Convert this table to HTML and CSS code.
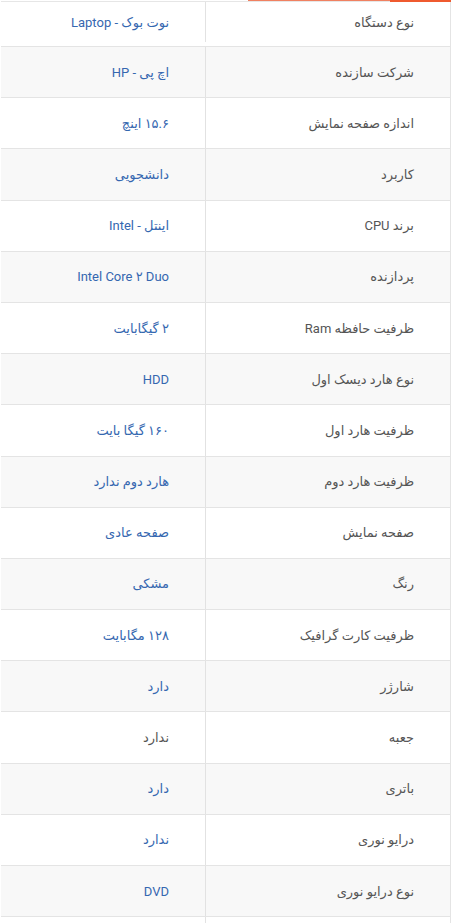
FILE: index.html
```html
<!DOCTYPE html>
<html lang="fa" dir="rtl">
<head>
<meta charset="utf-8">
<title>مشخصات</title>
<link rel="stylesheet" href="styles.css">
</head>
<body>
<div class="tabline">
  <span class="tab-active"></span>
  <span class="tab-hover"></span>
  <span class="tab-rest"></span>
</div>
<div class="specs">
  <div class="row"><div class="label">نوع دستگاه</div><div class="value link">نوت بوک - Laptop</div></div>
  <div class="row"><div class="label">شرکت سازنده</div><div class="value link">اچ پی - HP</div></div>
  <div class="row"><div class="label">اندازه صفحه نمایش</div><div class="value link">۱۵.۶ اینچ</div></div>
  <div class="row"><div class="label">کاربرد</div><div class="value link">دانشجویی</div></div>
  <div class="row"><div class="label">برند CPU</div><div class="value link">اینتل - Intel</div></div>
  <div class="row"><div class="label">پردازنده</div><div class="value link">Intel Core ۲ Duo</div></div>
  <div class="row"><div class="label">ظرفیت حافظه Ram</div><div class="value link">۲ گیگابایت</div></div>
  <div class="row"><div class="label">نوع هارد دیسک اول</div><div class="value link">HDD</div></div>
  <div class="row"><div class="label">ظرفیت هارد اول</div><div class="value link">۱۶۰ گیگا بایت</div></div>
  <div class="row"><div class="label">ظرفیت هارد دوم</div><div class="value link">هارد دوم ندارد</div></div>
  <div class="row"><div class="label">صفحه نمایش</div><div class="value link">صفحه عادی</div></div>
  <div class="row"><div class="label">رنگ</div><div class="value link">مشکی</div></div>
  <div class="row"><div class="label">ظرفیت کارت گرافیک</div><div class="value link">۱۲۸ مگابایت</div></div>
  <div class="row"><div class="label">شارژر</div><div class="value link">دارد</div></div>
  <div class="row"><div class="label">جعبه</div><div class="value">ندارد</div></div>
  <div class="row"><div class="label">باتری</div><div class="value link">دارد</div></div>
  <div class="row"><div class="label">درایو نوری</div><div class="value link">ندارد</div></div>
  <div class="row"><div class="label">نوع درایو نوری</div><div class="value link">DVD</div></div>
  <div class="row row-empty"><div class="label"></div><div class="value"></div></div>
</div>
</body>
</html>
```
FILE: styles.css
```css
* { box-sizing: border-box; }
html, body { margin: 0; padding: 0; background: #fff; }
body {
  font-family: Roboto, "DejaVu Sans", sans-serif;
  font-size: 13px;
  color: #555;
  overflow: hidden;
}
.tabline {
  display: flex;
  align-items: flex-start;
  height: 1px;
  width: 451px;
}
.tab-active { width: 61px; height: 2px; background: #ef5a2f; }
.tab-hover { width: 142px; height: 1px; background: #f08060; }
.tab-rest { flex: 1; height: 1px; }
.specs {
  width: 450px;
  border-top: 1px solid #e6e6e6;
  border-right: 1px solid #e4e4e4;
}
.row {
  display: grid;
  grid-template-columns: 245px 1fr;
  height: 51.2px;
  border-bottom: 1px solid #e4e4e4;
}
.row:nth-child(even) { background: #f8f8f8; }
.row:first-child { height: 45px; padding-bottom: 4px; }
.label, .value {
  display: flex;
  align-items: center;
  padding-right: 36px;
  white-space: nowrap;
}
.label { border-left: 1px solid #e2e2e2; color: #555; }
.value { color: #555; }
.value.link { color: #3567b0; }
```
